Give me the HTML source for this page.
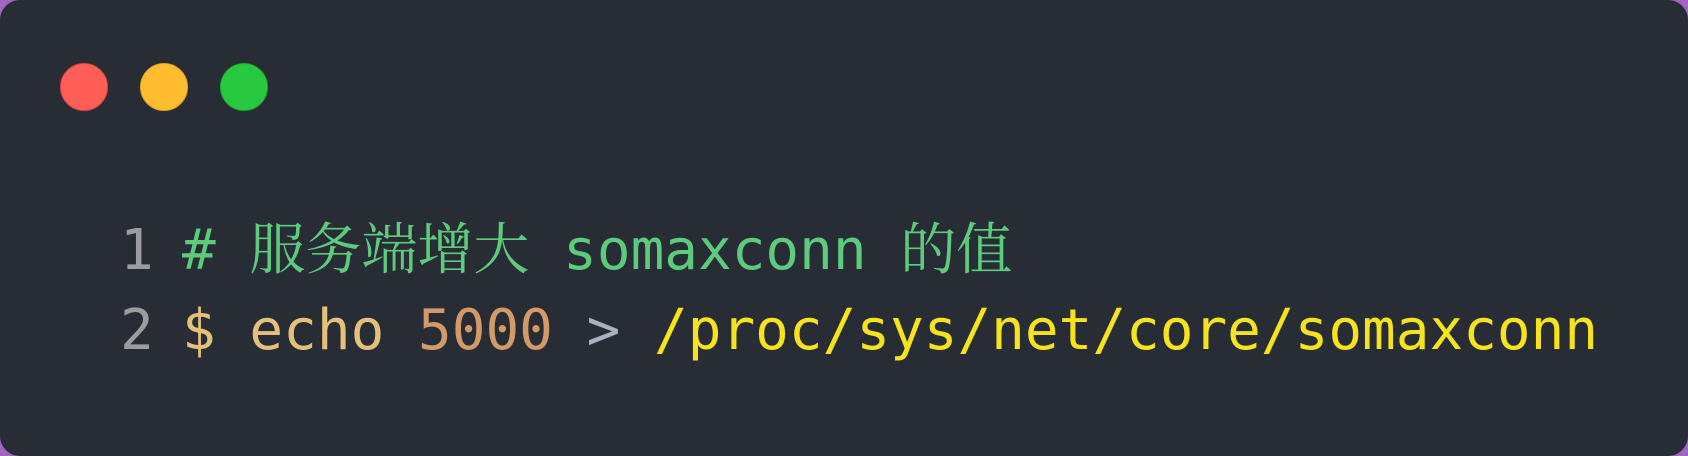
<!DOCTYPE html>
<html><head><meta charset="utf-8"><style>
html,body{margin:0;padding:0;width:1688px;height:456px;background:#a066c0;overflow:hidden}
.win{position:absolute;left:0;top:0;width:1688px;height:456px;background:#282c35;border-radius:20px}
.d{position:absolute;top:63px;width:48px;height:48px;border-radius:50%;box-sizing:border-box}
pre{position:absolute;top:211px;margin:0;font-family:"DejaVu Sans Mono","Liberation Mono","Noto Sans CJK SC",monospace;font-size:56px;line-height:80px;color:#abb2bf}
.n{color:#9a9c9e}.c{color:#5dcb7c;font-family:"DejaVu Sans Mono","Noto Serif CJK SC",monospace}.y{color:#e5c07b}.o{color:#d19a66}.p{color:#f5e31d}
</style></head><body><div class="win">
<div class="d" style="left:60px;background:#ff5f57;border:1.5px solid #e0443e"></div>
<div class="d" style="left:140px;background:#febc2e;border:1.5px solid #dea123"></div>
<div class="d" style="left:220px;background:#28c840;border:1.5px solid #1aab29"></div>
<pre class="n" style="left:120px">1
2</pre>
<pre style="left:182px"><span class="c"># 服务端增大 somaxconn 的值</span>
<span class="y">$ echo</span> <span class="o">5000</span> &gt; <span class="p">/proc/sys/net/core/somaxconn</span></pre>
</div></body></html>
